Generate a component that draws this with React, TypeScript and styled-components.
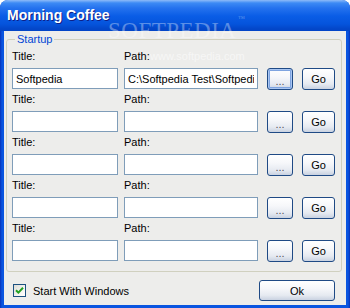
import React from "react";
import styled, { createGlobalStyle } from "styled-components";

const GlobalStyle = createGlobalStyle`
  html, body { margin: 0; padding: 0; background: #ffffff; }
  body { font-family: "Liberation Sans", Arial, sans-serif; font-size: 11px; color: #000; }
`;

const Window = styled.div`
  position: relative;
  width: 350px;
  height: 308px;
  display: flex;
  flex-direction: column;
  background: linear-gradient(90deg, #0831B8 0px, #0A55E0 2px, #0A55E0 348px, #0831B8 350px);
  border-radius: 8px 8px 0 0;
  overflow: hidden;
`;

const TitleBar = styled.div`
  flex: none;
  height: 30px;
  display: flex;
  align-items: center;
  padding: 0 7px 1px;
  background: linear-gradient(180deg, #8EBBF8 0px, #3C8AF5 3px, #2572EE 8px, #0A5DE6 16px, #0554DC 24px, #0346C8 29px);
  color: #ffffff;
  font-size: 14px;
  font-weight: bold;
  text-shadow: 1px 1px 0 #0F1F86;
`;

const Frame = styled.div`
  flex: 1;
  display: flex;
  flex-direction: column;
  margin: 0 4px 3px 4px;
  background: #EDEDEB;
`;

const GroupBox = styled.fieldset`
  margin: 2px 4px 0 2px;
  padding: 4px 6px 9px 5px;
  border: 1px solid #D0D0BF;
  border-radius: 3px;
`;

const Legend = styled.legend`
  margin-left: 3px;
  padding: 0 2px;
  line-height: 13px;
  color: #0046D5;
`;

const Rows = styled.div`
  display: flex;
  flex-direction: column;
  gap: 3px;
`;

const Row = styled.div`
  display: grid;
  grid-template-columns: 112px 143px 35px 33px;
  grid-template-rows: 13px 23px;
  row-gap: 4px;
  align-items: center;
`;

const Label = styled.span`
  line-height: 13px;
`;

const TextBox = styled.input<{ $width: number }>`
  box-sizing: border-box;
  width: ${(p) => p.$width}px;
  height: 21px;
  margin: 0;
  padding: 0 3px;
  border: 1px solid #7F9DB9;
  background: #ffffff;
  font-family: "Liberation Sans", Arial, sans-serif;
  font-size: 11px;
  color: #000;
  outline: none;
`;

const Button = styled.button<{ $width: number; $focused?: boolean }>`
  box-sizing: border-box;
  width: ${(p) => p.$width}px;
  height: 22px;
  margin: 0;
  padding: 0;
  border: 1px solid #1F4A85;
  border-radius: 3px;
  background: linear-gradient(180deg, #FFFFFF 0%, #F6F7FA 40%, #E6EAF1 75%, #C9D2E1 100%);
  font-family: "Liberation Sans", Arial, sans-serif;
  font-size: 11px;
  color: #000;
  box-shadow: ${(p) => (p.$focused ? "inset 0 0 0 1px #A9C6F2, inset 0 0 0 2px #7FA4E0" : "none")};
`;

const Dots = styled.span`
  display: inline-block;
  color: #555;
  transform: translateY(2px);
`;

const Footer = styled.div`
  display: flex;
  align-items: center;
  justify-content: space-between;
  margin-top: 8px;
  padding: 0 11px 0 9px;
`;

const CheckLabel = styled.label`
  display: flex;
  align-items: center;
  gap: 7px;
  font-size: 11px;
`;

const CheckBox = styled.span`
  box-sizing: border-box;
  width: 13px;
  height: 13px;
  display: flex;
  align-items: center;
  justify-content: center;
  border: 1px solid #1C5180;
  background: linear-gradient(135deg, #DCDCD7 0%, #F4F4F0 60%, #FFFFFF 100%);
`;

const OkButton = styled(Button)`
  height: 21px;
`;

const Watermark = styled.div`
  position: absolute;
  left: 108px;
  top: 19px;
  font-family: "Liberation Serif", "Times New Roman", serif;
  font-size: 23px;
  line-height: 23px;
  letter-spacing: 0.5px;
  color: rgba(255, 255, 255, 0.35);
  pointer-events: none;
`;

const Trademark = styled.span`
  position: absolute;
  left: 130px;
  top: -3px;
  font-size: 7px;
  line-height: 7px;
`;

const WatermarkUrl = styled.div`
  position: absolute;
  left: 150px;
  top: 50px;
  font-size: 11px;
  line-height: 13px;
  color: rgba(255, 255, 255, 0.55);
  pointer-events: none;
`;

const entries = [
  { title: "Softpedia", path: "C:\\Softpedia Test\\Softpedia.exe" },
  { title: "", path: "" },
  { title: "", path: "" },
  { title: "", path: "" },
  { title: "", path: "" },
];

export default function App() {
  return (
    <>
      <GlobalStyle />
      <Window>
        <TitleBar>Morning Coffee</TitleBar>
        <Frame>
          <GroupBox>
            <Legend>Startup</Legend>
            <Rows>
              {entries.map((entry, i) => (
                <Row key={i}>
                  <Label>Title:</Label>
                  <Label>Path:</Label>
                  <span />
                  <span />
                  <TextBox $width={106} defaultValue={entry.title} />
                  <TextBox $width={134} defaultValue={entry.path} />
                  <Button $width={26} $focused={i === 0}>
                    <Dots>...</Dots>
                  </Button>
                  <Button $width={33}>Go</Button>
                </Row>
              ))}
            </Rows>
          </GroupBox>
          <Footer>
            <CheckLabel>
              <CheckBox>
                <svg width="9" height="9" viewBox="0 0 9 9">
                  <path d="M1 4.2 L3.4 6.6 L8 1.8" fill="none" stroke="#21A121" strokeWidth="2" />
                </svg>
              </CheckBox>
              Start With Windows
            </CheckLabel>
            <OkButton $width={76}>Ok</OkButton>
          </Footer>
        </Frame>
        <Watermark>
          SOFTPEDIA<Trademark>™</Trademark>
        </Watermark>
        <WatermarkUrl>www.softpedia.com</WatermarkUrl>
      </Window>
    </>
  );
}
